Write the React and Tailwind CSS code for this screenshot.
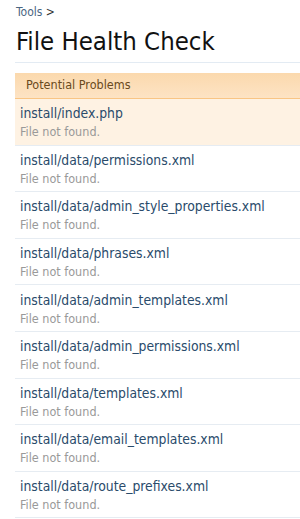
export default function App() {
  const files = [
    "install/index.php",
    "install/data/permissions.xml",
    "install/data/admin_style_properties.xml",
    "install/data/phrases.xml",
    "install/data/admin_templates.xml",
    "install/data/admin_permissions.xml",
    "install/data/templates.xml",
    "install/data/email_templates.xml",
    "install/data/route_prefixes.xml",
  ];
  return (
    <div className="h-[519px] overflow-hidden bg-white pl-[15px] font-stretch-condensed" style={{ fontFamily: '"DejaVu Sans Condensed", "DejaVu Sans", sans-serif' }}>
      <div className="pt-[5px] pl-[1px] text-[12px] leading-[14px] text-[#4a6682]">
        Tools <span className="text-[#333]">&gt;</span>
      </div>
      <h1 className="mt-[6px] pl-[1px] text-[25.5px] leading-[32px] text-[#111]">File Health Check</h1>
      <div className="mt-[5px] h-px bg-[#e3ebf3]" />
      <div className="mt-[10px] flex h-[26px] items-center border-b border-[#f9c585] bg-gradient-to-b from-[#fbd9ad] to-[#fde3c4] pl-[11px] text-[12.5px] text-[#6a4a20]">
        Potential Problems
      </div>
      {files.map((f, i) => (
        <div key={f} className={`flex h-[46.6px] flex-col justify-center border-b border-[#e6ecf2] pl-[5px] pt-[2px] ${i === 0 ? "bg-[#fef2e3]" : ""}`}>
          <div className="text-[13.8px] leading-[17px] text-[#2a4b6b]">{f}</div>
          <div className="mt-[1px] text-[12.5px] leading-[17px] text-[#999]">File not found.</div>
        </div>
      ))}
    </div>
  );
}
